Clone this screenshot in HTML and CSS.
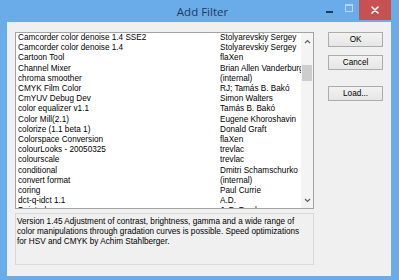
FILE: index.html
```html
<!DOCTYPE html>
<html>
<head>
<meta charset="utf-8">
<link rel="stylesheet" href="styles.css">
</head>
<body>
<div class="window">
  <div class="titlebar">
    <div></div>
    <div class="title">Add Filter</div>
    <div class="controls">
      <span class="ctl min"><span class="dash"></span></span>
      <span class="ctl max"><span class="box"></span></span>
      <span class="ctl close">
        <svg width="8" height="8" viewBox="0 0 8 8"><path d="M1 1L7 7M7 1L1 7" stroke="#fff" stroke-width="1.6" stroke-linecap="round"/></svg>
      </span>
    </div>
  </div>
  <div class="client">
    <div class="main">
      <div class="list">
        <div class="rows">
          <div class="row"><span>Camcorder color denoise 1.4 SSE2</span><span>Stolyarevskiy Sergey</span></div>
          <div class="row"><span>Camcorder color denoise 1.4</span><span>Stolyarevskiy Sergey</span></div>
          <div class="row"><span>Cartoon Tool</span><span>flaXen</span></div>
          <div class="row"><span>Channel Mixer</span><span>Brian Allen Vanderburg II</span></div>
          <div class="row"><span>chroma smoother</span><span>(internal)</span></div>
          <div class="row"><span>CMYK Film Color</span><span>RJ; Tamás B. Bakó</span></div>
          <div class="row"><span>CmYUV Debug Dev</span><span>Simon Walters</span></div>
          <div class="row"><span>color equalizer v1.1</span><span>Tamás B. Bakó</span></div>
          <div class="row"><span>Color Mill(2.1)</span><span>Eugene Khoroshavin</span></div>
          <div class="row"><span>colorize (1.1 beta 1)</span><span>Donald Graft</span></div>
          <div class="row"><span>Colorspace Conversion</span><span>flaXen</span></div>
          <div class="row"><span>colourLooks - 20050325</span><span>trevlac</span></div>
          <div class="row"><span>colourscale</span><span>trevlac</span></div>
          <div class="row"><span>conditional</span><span>Dmitri Schamschurko</span></div>
          <div class="row"><span>convert format</span><span>(internal)</span></div>
          <div class="row"><span>coring</span><span>Paul Currie</span></div>
          <div class="row"><span>dct-q-idct 1.1</span><span>A.D.</span></div>
          <div class="row"><span>Deinterlace</span><span>J. B. Forsberg</span></div>
        </div>
        <div class="scrollbar">
          <div class="arrow">
            <svg width="7" height="5" viewBox="0 0 7 5"><path d="M1 4L3.5 1.5L6 4" fill="none" stroke="#606060" stroke-width="1.2"/></svg>
          </div>
          <div class="track"><div class="thumb"></div></div>
          <div class="arrow">
            <svg width="7" height="5" viewBox="0 0 7 5"><path d="M1 1L3.5 3.5L6 1" fill="none" stroke="#606060" stroke-width="1.2"/></svg>
          </div>
        </div>
      </div>
      <div class="desc">Version 1.45 Adjustment of contrast, brightness, gamma and a wide range of<br>color manipulations through gradation curves is possible. Speed optimizations<br>for HSV and CMYK by Achim Stahlberger.</div>
    </div>
    <div class="buttons">
      <div class="btn">OK</div>
      <div class="btn">Cancel</div>
      <div class="btn load">Load...</div>
    </div>
  </div>
</div>
</body>
</html>
```

FILE: styles.css
```css
html, body {
  margin: 0;
  padding: 0;
}
body {
  width: 399px;
  height: 280px;
  overflow: hidden;
  background: #6aabea;
  font-family: "Liberation Sans", Arial, sans-serif;
}
.window {
  width: 399px;
  height: 280px;
  box-sizing: border-box;
  padding: 0 8px 4px 7px;
  display: flex;
  flex-direction: column;
}
.titlebar {
  height: 22px;
  display: grid;
  grid-template-columns: 1fr auto 1fr;
  align-items: start;
}
.title {
  font-family: "Open Sans", "Noto Sans", sans-serif;
  font-size: 11.5px;
  color: #1f3b5c;
  line-height: 22px;
  margin-top: 1px;
  padding-left: 7px;
}
.controls {
  display: flex;
  justify-content: flex-end;
  height: 20px;
}
.ctl {
  display: flex;
  align-items: center;
  justify-content: center;
  height: 20px;
}
.min {
  width: 18px;
}
.min .dash {
  width: 7px;
  height: 2px;
  background: #1f3b5c;
  margin-top: 3px;
}
.max {
  width: 21px;
}
.max .box {
  width: 6px;
  height: 5px;
  border: 1px solid #b9d6f3;
  border-top-width: 2px;
  margin-top: -4px;
}
.close {
  width: 32px;
  background: #c75050;
}
.client {
  flex: 1;
  background: #f0f0f0;
  display: flex;
  padding: 10px 8px 11px 8px;
  gap: 14px;
}
.main {
  width: 300px;
  display: flex;
  flex-direction: column;
  gap: 4px;
}
.list {
  height: 177px;
  box-sizing: border-box;
  border: 1px solid #a3a3a3;
  background: #fff;
  display: flex;
  overflow: hidden;
}
.rows {
  flex: 1;
  overflow: hidden;
  font-size: 8.2px;
  line-height: 10.2px;
  color: #000;
}
.row {
  display: grid;
  grid-template-columns: 202px 1fr;
  padding-left: 2px;
  white-space: nowrap;
}
.row span {
  overflow: hidden;
}
.scrollbar {
  width: 12px;
  background: #f4f4f4;
  display: flex;
  flex-direction: column;
}
.arrow {
  height: 16px;
  display: flex;
  align-items: center;
  justify-content: center;
}
.track {
  flex: 1;
  padding: 16px 1px 0 1px;
}
.thumb {
  height: 16px;
  background: #cdcdcd;
}
.desc {
  flex: 1;
  box-sizing: border-box;
  border: 1px solid #d9d9d9;
  background: #f0f0f0;
  font-size: 8.2px;
  line-height: 10px;
  padding: 3px 1px 0 1px;
  color: #000;
  white-space: nowrap;
}
.buttons {
  width: 55px;
  display: flex;
  flex-direction: column;
  gap: 8px;
}
.btn {
  height: 15px;
  box-sizing: border-box;
  border: 1px solid #acacac;
  background: linear-gradient(#f2f2f2, #e6e6e6);
  font-size: 8.2px;
  line-height: 13px;
  text-align: center;
  color: #000;
}
.btn.load {
  margin-top: 8px;
}
```
